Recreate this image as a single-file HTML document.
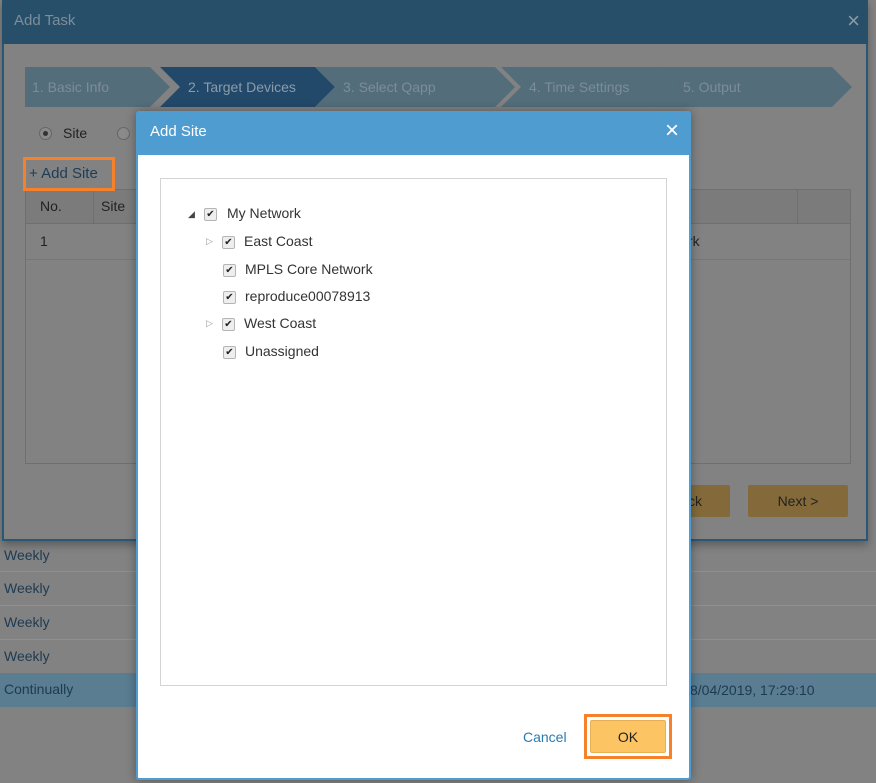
<!DOCTYPE html>
<html><head><meta charset="utf-8"><style>
*{box-sizing:border-box;margin:0;padding:0}
body{width:876px;height:783px;overflow:hidden;background:#828282;font-family:"Liberation Sans",sans-serif;position:relative;font-size:14px}
.abs{position:absolute}
.row{position:absolute;left:0;width:876px;height:34px;border-bottom:1px solid #8f8f8f;color:#1e3a52;padding:8px 4px;font-size:14px}
.task{position:absolute;left:2px;top:0;width:866px;height:541px;border:2px solid #2b5777;border-top:none;background:#828282;box-shadow:0 4px 8px rgba(0,0,0,.3)}
.th{position:absolute;left:-2px;top:0;width:866px;height:44px;background:#274f6a;color:#7d8d99;font-size:15px;padding:12px 12px}
.step{position:absolute;top:67px;height:40px;color:#7c8d98;font-size:14px;padding:12px 0 0 0}
.dlg{position:absolute;left:136px;top:111px;width:555px;height:669px;background:#fff;border:2px solid #4f9cd0;border-top:none;border-radius:3px;box-shadow:0 0 10px rgba(0,0,0,.35)}
.dh{position:absolute;left:-2px;top:0;width:555px;height:44px;background:#4f9cd0;color:#fff;font-size:15px;padding:12px 14px;border-radius:3px 3px 0 0}
.cb{position:absolute;width:13px;height:13px;border:1px solid #b5b5b5;border-radius:2px;background:#eee;font-size:10px;line-height:11px;text-align:center;color:#222}
.tl{position:absolute;color:#333;font-size:14px}
.arr{position:absolute;color:#999;font-size:9px}
</style></head><body>
<div class="row" style="top:539px;height:33px">Weekly</div>
<div class="row" style="top:572px">Weekly</div>
<div class="row" style="top:606px">Weekly</div>
<div class="row" style="top:640px">Weekly</div>
<div class="row" style="top:673px;background:#5a7d92;border:none">Continually</div>
<div class="abs" style="left:690px;top:682px;color:#1e3a52">8/04/2019, 17:29:10</div>

<div class="task">
<div class="th">Add Task<span style="position:absolute;right:8px;top:8px;font-size:22px;color:#8a9aa6">×</span></div>
<svg class="abs" style="left:21px;top:67px" width="832" height="40">
<polygon points="0,0 125,0 145,20 125,40 0,40" fill="#536d7b"/>
<polygon points="135,0 290,0 310,20 290,40 135,40 155,20" fill="#23496a"/>
<polygon points="290,0 470,0 490,20 470,40 290,40 310,20" fill="#536d7b"/>
<polygon points="476,0 630,0 650,20 630,40 476,40 496,20" fill="#536d7b"/>
<polygon points="630,0 807,0 827,20 807,40 630,40 650,20" fill="#536d7b"/>
</svg>
<div class="step" style="left:28px">1. Basic Info</div>
<div class="step" style="left:184px;color:#8a9cab">2. Target Devices</div>
<div class="step" style="left:339px">3. Select Qapp</div>
<div class="step" style="left:525px">4. Time Settings</div>
<div class="step" style="left:679px">5. Output</div>
<div class="abs" style="left:35px;top:127px;width:13px;height:13px;border:1px solid #666;border-radius:50%;background:#8a8a8a"><div style="margin:3px;width:5px;height:5px;border-radius:50%;background:#333"></div></div>
<div class="abs" style="left:59px;top:125px;color:#222">Site</div>
<div class="abs" style="left:113px;top:127px;width:13px;height:13px;border:1px solid #666;border-radius:50%;background:#8a8a8a"></div>
<div class="abs" style="left:21px;top:189px;width:826px;height:275px;border:1px solid #6f6f6f"></div>
<div class="abs" style="left:22px;top:190px;width:824px;height:34px;background:#7b7b7b;border-bottom:1px solid #6f6f6f"></div>
<div class="abs" style="left:89px;top:190px;width:1px;height:34px;background:#6f6f6f"></div>
<div class="abs" style="left:793px;top:190px;width:1px;height:34px;background:#6f6f6f"></div>
<div class="abs" style="left:36px;top:198px;color:#222">No.</div>
<div class="abs" style="left:97px;top:198px;color:#222">Site</div>
<div class="abs" style="left:22px;top:259px;width:824px;height:1px;background:#777"></div>
<div class="abs" style="left:36px;top:233px;color:#222">1</div>
<div class="abs" style="left:684px;top:233px;color:#222">rk</div>
<div class="abs" style="left:19px;top:157px;width:92px;height:34px;border:3px solid #f7802a"></div>
<div class="abs" style="left:25px;top:165px;color:#1c3d58;font-size:15px">+ Add Site</div>
<div class="abs" style="left:636px;top:485px;width:90px;height:32px;background:#846a3a;border-radius:2px;color:#222;padding:8px 0 0 48px">ck</div>
<div class="abs" style="left:744px;top:485px;width:100px;height:32px;background:#846a3a;border-radius:2px;color:#222;text-align:center;padding-top:8px">Next &gt;</div>
</div>

<div class="dlg">
<div class="dh">Add Site<span style="position:absolute;right:12px;top:6px;font-size:24px">×</span></div>
<div class="abs" style="left:22px;top:67px;width:507px;height:508px;border:1px solid #d4d4d4"></div>
<span class="arr" style="left:50px;top:98px;color:#444">◢</span>
<div class="cb" style="left:66px;top:97px">✔</div><div class="tl" style="left:89px;top:94px">My Network</div>
<span class="arr" style="left:68px;top:125px">▷</span>
<div class="cb" style="left:84px;top:125px">✔</div><div class="tl" style="left:106px;top:122px">East Coast</div>
<div class="cb" style="left:85px;top:153px">✔</div><div class="tl" style="left:107px;top:150px">MPLS Core Network</div>
<div class="cb" style="left:85px;top:180px">✔</div><div class="tl" style="left:107px;top:177px">reproduce00078913</div>
<span class="arr" style="left:68px;top:207px">▷</span>
<div class="cb" style="left:84px;top:207px">✔</div><div class="tl" style="left:106px;top:204px">West Coast</div>
<div class="cb" style="left:85px;top:235px">✔</div><div class="tl" style="left:107px;top:232px">Unassigned</div>
<div class="abs" style="left:385px;top:618px;color:#2a7ab0;font-size:14px">Cancel</div>
<div class="abs" style="left:446px;top:603px;width:88px;height:45px;border:3px solid #f7802a"></div>
<div class="abs" style="left:452px;top:609px;width:76px;height:33px;background:#fcc463;border:1px solid #e8b055;border-radius:2px;text-align:center;padding-top:8px;color:#222">OK</div>
</div>
</body></html>
